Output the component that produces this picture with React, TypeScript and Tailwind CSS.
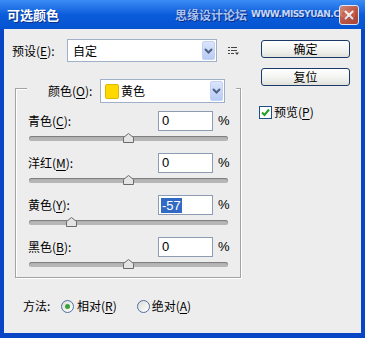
import React from 'react';

const FONT = '"Noto Sans CJK SC", "Liberation Sans", sans-serif';

const U: React.FC<{ children: React.ReactNode }> = ({ children }) => (
  <span className="underline underline-offset-2">{children}</span>
);

const Chevron: React.FC = () => (
  <div className="w-[15px] h-full p-[1px]">
    <div className="w-full h-full rounded-[2px] bg-gradient-to-b from-[#dbe5fb] to-[#b7cbf5] border border-[#c3d3f5] flex items-center justify-center">
      <svg width="9" height="6" viewBox="0 0 9 6">
        <path d="M1 1 L4.5 4.5 L8 1" fill="none" stroke="#4d6185" strokeWidth="2" />
      </svg>
    </div>
  </div>
);

const Combo: React.FC<{ w: string; h: string; children: React.ReactNode }> = ({ w, h, children }) => (
  <div className={`${w} ${h} bg-white border border-[#9fb0c8] flex items-stretch`}>
    <div className="flex-1 flex items-center pl-[5px] text-[12px] text-black">{children}</div>
    <Chevron />
  </div>
);

const Thumb: React.FC = () => (
  <svg width="11" height="10" viewBox="0 0 11 10">
    <path d="M5.5 0.5 L10.5 4.5 L10.5 9.5 L0.5 9.5 L0.5 4.5 Z" fill="#e4e4e4" stroke="#6b6b6b" />
  </svg>
);

interface RowProps {
  label: React.ReactNode;
  value: string;
  pos: number; // 0..1
  selected?: boolean;
}

const SliderRow: React.FC<RowProps> = ({ label, value, pos, selected }) => (
  <div className="flex flex-col">
    <div className="flex items-center h-[20px] pl-[12px]">
      <div className="w-[130px] text-[12px] text-black">{label}</div>
      <div className="w-[55px] h-[20px] bg-white border border-[#8d9cb3] flex items-center pl-[2px] text-[13px]" style={{ fontFamily: '"Liberation Sans", sans-serif' }}>
        {selected ? <span className="bg-[#316ac5] text-white leading-[15px] px-[1px]">-57</span> : <span className="pl-[1px]">{value}</span>}
      </div>
      <div className="ml-[5px] text-[13px]" style={{ fontFamily: '"Liberation Sans", sans-serif' }}>%</div>
    </div>
    <div className="relative ml-[13px] mt-[2px] w-[199px] h-[10px] flex items-center">
      <div className="w-full h-[5px] rounded-full bg-[#b6b6b6] shadow-[inset_0_1px_1px_#7a7a7a]" />
      <div className="absolute top-0" style={{ left: `${pos * 199 - 5.5}px` }}>
        <Thumb />
      </div>
    </div>
  </div>
);

const Radio: React.FC<{ checked?: boolean }> = ({ checked }) => (
  <div className="w-[13px] h-[13px] rounded-full border border-[#4f6fa0] bg-gradient-to-br from-[#dcdcd6] to-white flex items-center justify-center">
    {checked && <div className="w-[5px] h-[5px] rounded-full bg-[#3aa23a]" />}
  </div>
);

const XpButton: React.FC<{ children: React.ReactNode }> = ({ children }) => (
  <div className="w-[89px] h-[18px] rounded-[3px] border border-[#1b3a6a] bg-gradient-to-b from-white via-[#f4f4f2] to-[#e2e2dc] flex items-center justify-center text-[12px] text-black">
    {children}
  </div>
);

export default function App() {
  return (
    <div className="w-[365px] h-[338px] bg-[#0846c6] flex flex-col overflow-hidden" style={{ fontFamily: FONT }}>
      {/* title bar */}
      <div className="relative h-[29px] flex items-center bg-gradient-to-b from-[#3b8cf5] via-[#0b5ddb] to-[#0553d0]">
        <span className="ml-[7px] text-white font-bold text-[13px] [text-shadow:1px_1px_0_#0a2f8a]">可选颜色</span>
        <span className="ml-auto text-[12px] font-bold text-[#a9c4f5] [text-shadow:0_0_1px_#0c2f86,1px_1px_0_#0c2f86]">思缘设计论坛</span>
        <span className="ml-[4px] mr-[10px] text-[9px] font-bold text-[#c4d8fb] tracking-[-0.5px] [text-shadow:1px_1px_0_#0c2f86]" style={{ fontFamily: '"DejaVu Sans", sans-serif' }}>WWW.MISSYUAN.COM</span>
        <div className="absolute right-[6px] top-[5px] w-[20px] h-[20px] rounded-[3px] border border-white bg-gradient-to-br from-[#e98a6a] via-[#d9552c] to-[#c0401c] flex items-center justify-center opacity-85">
          <svg width="10" height="10" viewBox="0 0 10 10">
            <path d="M1 1 L9 9 M9 1 L1 9" stroke="white" strokeWidth="2" />
          </svg>
        </div>
      </div>

      {/* body */}
      <div className="flex-1 mx-[4px] mb-[5px] bg-[#ededed] flex">
        {/* left column */}
        <div className="w-[257px] pl-[8px] pt-[10px] flex flex-col">
          <div className="flex items-center">
            <div className="w-[55px] text-[12px] text-black">预设(<U>E</U>):</div>
            <Combo w="w-[150px]" h="h-[23px]">自定</Combo>
            <svg className="ml-[11px]" width="11" height="10" viewBox="0 0 11 10">
              <path d="M0 1.5 H2 M3 1.5 H9 M0 4.5 H2 M3 4.5 H9 M0 7.5 H2 M3 7.5 H6" stroke="#444" strokeWidth="1" />
              <path d="M7 6.5 L11 6.5 L9 9 Z" fill="#444" />
            </svg>
          </div>

          {/* group box */}
          <div className="ml-[3px] mt-[26px] w-[226px] h-[190px] border border-[#a3a3a3] shadow-[inset_1px_1px_0_#fff,1px_1px_0_#fff] flex flex-col">
            <div className="ml-[11px] -mt-[10px] w-[209px] bg-[#ededed] flex items-center">
              <div className="pl-[21px] w-[73px] text-[12px] text-black">颜色(<U>O</U>):</div>
              <Combo w="w-[125px]" h="h-[24px]">
                <div className="w-[14px] h-[15px] rounded-[2px] bg-[#ffd800] border border-[#e0b800] -ml-[1px] mr-[2px]" />
                黄色
              </Combo>
            </div>
            <div className="mt-[8px] flex flex-col gap-[10px]">
              <SliderRow label={<>青色(<U>C</U>):</>} value="0" pos={0.5} />
              <SliderRow label={<>洋红(<U>M</U>):</>} value="0" pos={0.5} />
              <SliderRow label={<>黄色(<U>Y</U>):</>} value="-57" pos={0.215} selected />
              <SliderRow label={<>黑色(<U>B</U>):</>} value="0" pos={0.5} />
            </div>
          </div>

          {/* method */}
          <div className="ml-[11px] mt-[21px] flex items-center text-[12px] text-black h-[14px]">
            <span className="w-[38px]">方法:</span>
            <Radio checked />
            <span className="ml-[3px]">相对(<U>R</U>)</span>
            <div className="ml-[20px]"><Radio /></div>
            <span className="ml-[2px]">绝对(<U>A</U>)</span>
          </div>
        </div>

        {/* right column */}
        <div className="pt-[11px] flex flex-col">
          <XpButton>确定</XpButton>
          <div className="mt-[10px]"><XpButton>复位</XpButton></div>
          <div className="mt-[17px] -ml-[2px] flex items-center text-[12px] text-black">
            <div className="w-[13px] h-[13px] border border-[#1c5180] bg-white flex items-center justify-center">
              <svg width="9" height="9" viewBox="0 0 9 9">
                <path d="M1 4.5 L3.5 7 L8 1.5" fill="none" stroke="#21a121" strokeWidth="2" />
              </svg>
            </div>
            <span className="ml-[2px]">预览(<U>P</U>)</span>
          </div>
        </div>
      </div>
    </div>
  );
}
